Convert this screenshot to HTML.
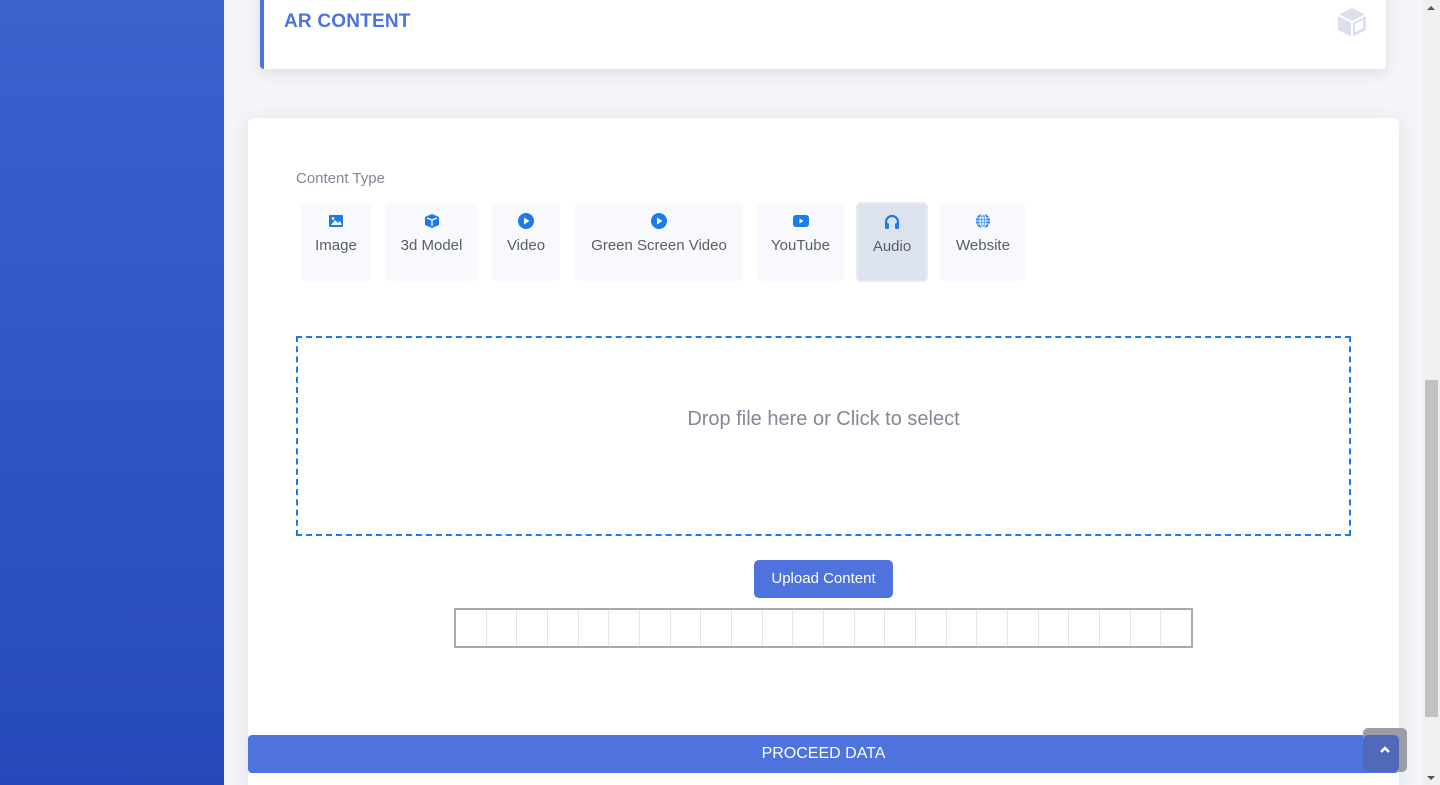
<!DOCTYPE html>
<html><head><style>
*{box-sizing:border-box;margin:0;padding:0}
html{width:1440px;height:785px;overflow:hidden}
body{width:1440px;height:785px;overflow:hidden;background:#f4f5f9;font-family:"Liberation Sans",sans-serif;position:relative}
.side{position:absolute;left:0;top:0;width:224px;height:785px;background:linear-gradient(#3a62cd,#2549ba)}
.top{position:absolute;left:260px;top:-10px;width:1126px;height:79px;background:#fff;border-left:4px solid #4e73df;border-radius:4px;box-shadow:0 4px 14px rgba(58,59,69,.12)}
.top h2{position:absolute;left:20px;top:21px;font-size:19px;font-weight:bold;color:#4e73df;letter-spacing:.2px}
.card{position:absolute;left:248px;top:118px;width:1151px;height:667px;background:#fff;border-radius:6px 6px 0 0;box-shadow:0 4px 18px rgba(58,59,69,.12)}
.lbl{position:absolute;left:48px;top:52px;font-size:15px;color:#858796}
.btn{position:absolute;top:85px;height:78px;background:#f8f9fc;border-radius:5px;text-align:center;font-size:15px;color:#5a5c69}
.btn svg{display:block;margin:10px auto 8px}
.btn.act{background:#dde2ef;border:2px solid #e8eaf0}
.btn.act svg{margin-top:10px}
.drop{position:absolute;left:48px;top:218px;width:1055px;height:200px;border:2px dashed #1b7bea;text-align:center;line-height:162px;font-size:20px;color:#858796}
.up{position:absolute;left:506px;top:442px;width:139px;height:38px;background:#4e73df;color:#fff;border-radius:5px;font-size:15px;text-align:center;line-height:38px}
.prog{position:absolute;left:206px;top:490px;width:739px;height:40px;border:2px solid #aaa;display:flex}
.prog div{flex:1;border-right:1px solid #e5e5e5}
.proc{position:absolute;left:248px;top:735px;width:1151px;height:38px;background:#4e73df;color:#fff;font-size:16px;text-align:center;line-height:38px;border-radius:4px}
.sb{position:absolute;left:1423px;top:0;width:17px;height:785px;background:#f0f0f0}
.th{position:absolute;left:1425px;top:380px;width:13px;height:337px;background:#c1c1c1}
.stt{position:absolute;left:1363px;top:728px;width:44px;height:44px;background:#9a9ca6;border-radius:5px}
.stt2{position:absolute;left:1363px;top:735px;width:36px;height:37px;background:#5069b8;border-radius:5px}
</style></head><body>
<div class="side"></div>
<div class="top"><h2>AR CONTENT</h2>
<svg style="position:absolute;right:18px;top:16px" width="32" height="32" viewBox="0 0 32 32"><path d="M16 2 L30 9 V24 L16 31 L2 24 V9Z" fill="#dde0ec"/><path d="M16 16 L30 9 M16 16 L2 9 M16 16 V31" stroke="#fff" stroke-width="2" fill="none"/><path d="M19 18 L27 14 V22 L19 26Z" fill="#fff"/></svg></div>
<div class="card">
<div class="lbl">Content Type</div>
<div class="btn" style="left:53px;width:70px"><svg width="16" height="16" viewBox="0 0 16 16"><rect x="1" y="2" width="14" height="12" rx="1" fill="#1b7bea"/><path d="M3 12 L7 7 L10 10 L12 8 L14 12Z" fill="#fff"/><circle cx="5" cy="5.5" r="1.3" fill="#fff"/></svg>Image</div>
<div class="btn" style="left:137px;width:93px"><svg width="16" height="16" viewBox="0 0 16 16"><path d="M8 1 L15 4 V12 L8 15 L1 12 V4Z" fill="#1b7bea"/><path d="M3 5 L8 7 L13 5 M8 7 V13" stroke="#fff" stroke-width="1.3" fill="none"/></svg>3d Model</div>
<div class="btn" style="left:244px;width:68px"><svg width="16" height="16" viewBox="0 0 16 16"><circle cx="8" cy="8" r="8" fill="#1b7bea"/><path d="M6 4.5 L11.5 8 L6 11.5Z" fill="#fff"/></svg>Video</div>
<div class="btn" style="left:327px;width:168px"><svg width="16" height="16" viewBox="0 0 16 16"><circle cx="8" cy="8" r="8" fill="#1b7bea"/><path d="M6 4.5 L11.5 8 L6 11.5Z" fill="#fff"/></svg>Green Screen Video</div>
<div class="btn" style="left:509px;width:87px"><svg width="18" height="16" viewBox="0 0 18 16"><rect x="1" y="2" width="16" height="12" rx="3" fill="#1b7bea"/><path d="M7.5 5.5 L11.5 8 L7.5 10.5Z" fill="#fff"/></svg>YouTube</div>
<div class="btn act" style="left:608px;width:72px;top:84px;height:80px"><svg width="16" height="16" viewBox="0 0 16 16"><path d="M2 11 V8 A6 6 0 0 1 14 8 V11" stroke="#1b7bea" stroke-width="2.2" fill="none"/><rect x="1" y="9" width="4" height="6" rx="1.5" fill="#1b7bea"/><rect x="11" y="9" width="4" height="6" rx="1.5" fill="#1b7bea"/></svg>Audio</div>
<div class="btn" style="left:692px;width:86px"><svg width="16" height="16" viewBox="0 0 16 16"><circle cx="8" cy="8" r="7" fill="#1b7bea"/><path d="M1 8 H15 M8 1 V15 M2 5 H14 M2 11 H14" stroke="#fff" stroke-width="1"/><ellipse cx="8" cy="8" rx="3" ry="7" stroke="#fff" stroke-width="1" fill="none"/></svg>Website</div>
<div class="drop">Drop file here or Click to select</div>
<div class="up">Upload Content</div>
<div class="prog"><div></div><div></div><div></div><div></div><div></div><div></div><div></div><div></div><div></div><div></div><div></div><div></div><div></div><div></div><div></div><div></div><div></div><div></div><div></div><div></div><div></div><div></div><div></div><div style="border:none"></div></div>
</div>
<div class="proc">PROCEED DATA</div>
<div class="sb"></div><div class="th"></div>
<div style="position:absolute;left:1427px;top:6px;border:4px solid transparent;border-bottom:4px solid #555;border-top:0"></div>
<div style="position:absolute;left:1427px;top:776px;border:4px solid transparent;border-top:4px solid #555;border-bottom:0"></div>
<div class="stt"></div><div class="stt2"></div>
<svg style="position:absolute;left:1379px;top:745px" width="12" height="10" viewBox="0 0 12 10"><path d="M2 7 L6 3 L10 7" stroke="#fff" stroke-width="2.5" fill="none"/></svg>
</body></html>
